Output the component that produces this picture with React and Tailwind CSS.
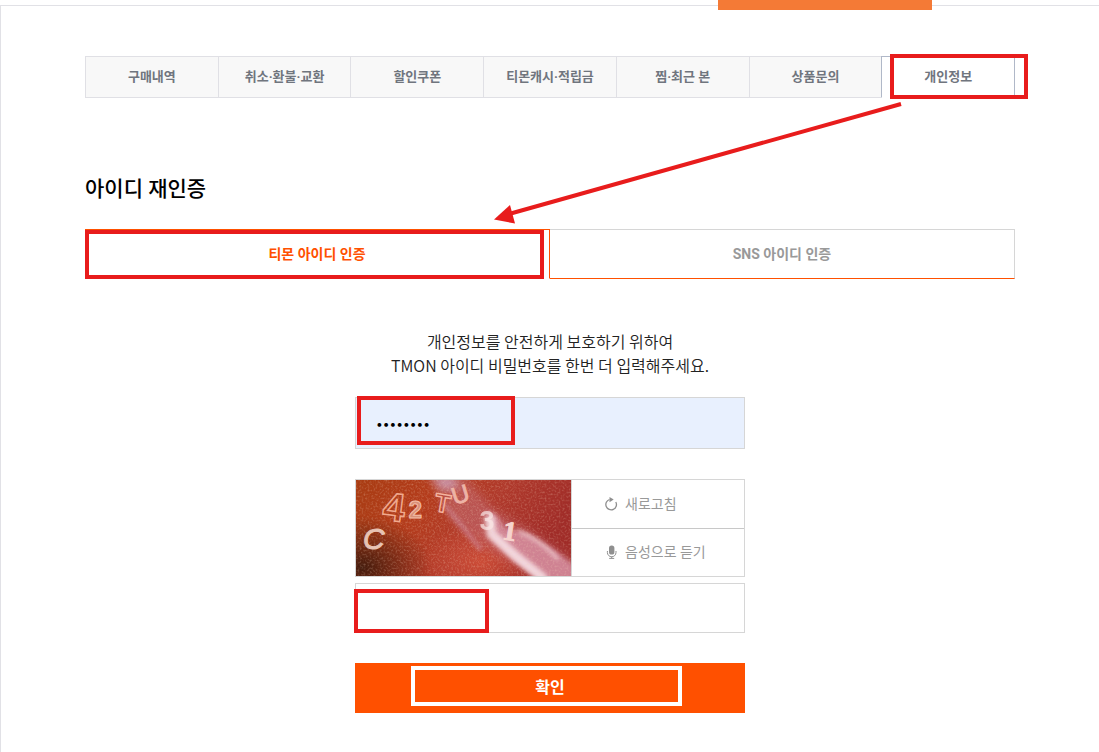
// src/App.jsx
import React, { useState } from "react";

const MENU = [
  "구매내역",
  "취소·환불·교환",
  "할인쿠폰",
  "티몬캐시·적립금",
  "찜·최근 본",
  "상품문의",
  "개인정보",
];

// Outline drawn over a control to point the reader at it
const Marker = ({ className }) => (
  <span
    aria-hidden="true"
    className={`pointer-events-none absolute border-4 ${className}`}
  />
);

const RefreshIcon = () => (
  <svg className="h-[14px] w-[14px]" viewBox="0 0 14 14" fill="none" aria-hidden="true">
    <path d="M11.8 5A5.300 5.300 0 1 1 5.500 2.500" stroke="#8f8f8f" strokeWidth="1.300" />
    <path d="M5.500 0l4.200 2.400-4.200 2.900z" fill="#8f8f8f" />
  </svg>
);

const MicIcon = () => (
  <svg className="h-[14px] w-[14px]" viewBox="0 0 14 14" fill="none" aria-hidden="true">
    <rect x="5" y="0.500" width="5.400" height="9" rx="2.600" fill="#8f8f8f" />
    <path d="M3.400 6v1.500a4.300 4.300 0 0 0 8.600 0V6M7.700 11.500V13M5.200 13.400h5" stroke="#8f8f8f" />
  </svg>
);

const CaptchaImage = () => (
  <svg
    className="block h-24 w-full"
    viewBox="0 0 216 96"
    preserveAspectRatio="none"
    role="img"
    aria-label="자동입력 방지 문자"
  >
    <defs>
      <linearGradient id="base" x1="0" y1="0" x2="1" y2="0.3">
        <stop offset="0" stopColor="#a83c12" />
        <stop offset="0.35" stopColor="#b43c1c" />
        <stop offset="0.65" stopColor="#b03a2c" />
        <stop offset="1" stopColor="#a02c28" />
      </linearGradient>
      <radialGradient id="shade">
        <stop offset="0" stopColor="#30150a" stopOpacity="0.85" />
        <stop offset="1" stopColor="#30150a" stopOpacity="0" />
      </radialGradient>
      <radialGradient id="glow">
        <stop offset="0" stopColor="#d4523a" stopOpacity="0.8" />
        <stop offset="1" stopColor="#d4523a" stopOpacity="0" />
      </radialGradient>
      <filter id="soft" x="-20%" y="-20%" width="140%" height="140%">
        <feGaussianBlur stdDeviation="2" />
      </filter>
      <filter id="softer" x="-20%" y="-20%" width="140%" height="140%">
        <feGaussianBlur stdDeviation="5" />
      </filter>
      <filter id="grain" x="0" y="0" width="100%" height="100%">
        <feTurbulence type="fractalNoise" baseFrequency="0.5" numOctaves="3" seed="4" />
        <feColorMatrix values="0 0 0 0 0.9  0 0 0 0 0.65  0 0 0 0 0.5  0 1.8 0 0 -0.8" />
      </filter>
    </defs>
    <rect width="216" height="96" fill="url(#base)" />
    <ellipse cx="6" cy="88" rx="70" ry="52" fill="url(#shade)" />
    <ellipse cx="125" cy="82" rx="60" ry="40" fill="url(#glow)" />
    <path d="M74-6h34l28 34 40 24 44 30v18h-34l-50-30-40-30z" fill="#c4707c" opacity="0.5" filter="url(#softer)" />
    <path d="M74-4h24l6 12-18 2z" fill="#d0b0d0" opacity="0.7" filter="url(#softer)" />
    <path d="M88 24l38 46" stroke="#d090a8" strokeWidth="5" opacity="0.55" filter="url(#soft)" />
    <path d="M130 30l10 4 10 14 24 6 28 18 18 14v14h-34l-30-22-18-18z" fill="#d994a8" opacity="0.75" filter="url(#soft)" />
    <path d="M134 36l2 18 24 22 30 24" stroke="#f8e4ea" strokeWidth="10" fill="none" opacity="0.85" filter="url(#soft)" />
    <path d="M163 51q24 10 40 28" stroke="#f6dade" strokeWidth="3" fill="none" opacity="0.8" filter="url(#soft)" />
    <rect width="216" height="96" filter="url(#grain)" opacity="0.35" />
    <g fontFamily='"Liberation Sans", sans-serif' fontWeight="700">
      <text x="7" y="69" fontSize="30" fontStyle="italic" fontWeight="400" fill="#e8c3b4" stroke="#e8c3b4">C</text>
      <text x="27" y="41" fontSize="40" fill="none" stroke="#f0a98e" strokeWidth="1.500" transform="rotate(7 38 30)">4</text>
      <text x="53" y="38" fontSize="24" fill="#d89078" stroke="#f4bea8">2</text>
      <text x="79" y="32" fontSize="26" fill="none" stroke="#f4b4a0" strokeWidth="1.400" transform="rotate(10 86 24)">T</text>
      <text x="96" y="23" fontSize="24" fontWeight="400" fill="#edb3a6" stroke="#edb3a6" transform="rotate(-17 104 14)">U</text>
      <text x="124" y="50" fontSize="27" fill="#fae8e6" opacity="0.7">3</text>
      <text x="148" y="60" fontSize="27" fontFamily='"Liberation Serif", serif' fill="#f6d4ce" stroke="#f6d4ce" transform="rotate(9 154 50)">1</text>
    </g>
  </svg>
);

export default function App() {
  const [password, setPassword] = useState("tmonpass");
  const [answer, setAnswer] = useState("");

  return (
    <div className="relative min-h-screen bg-white pt-[5px] font-['Roboto','Noto_Sans_CJK_KR',sans-serif]">
      <div className="absolute top-0 right-[167px] h-[10px] w-[214px] bg-[#f47a36]" />

      <div className="min-h-[747px] border-t border-l border-[#e1e1e6] pt-[50px] pb-8">
        <div className="relative mx-auto max-w-[930px]">
          {/* --- My page menu --- */}
          <nav>
            <ul className="flex h-[42px]">
              {MENU.map((label) => {
                const active = label === "개인정보";
                return (
                  <li
                    key={label}
                    className={`relative flex-1 border-y border-l ${
                      active
                        ? "border-r border-[#b0b8c8] border-b-white bg-white"
                        : "border-[#e0e0e5] bg-[#f8f8f8]"
                    }`}
                  >
                    <a
                      href="#"
                      aria-current={active ? "page" : undefined}
                      className="flex h-full items-center justify-center text-[13px] font-bold whitespace-nowrap text-[#70757e]"
                    >
                      {label}
                    </a>
                    {active && (
                      <Marker className="-top-[3px] left-2 h-[45px] w-[138px] border-[#e81c1c]" />
                    )}
                  </li>
                );
              })}
            </ul>
          </nav>

          {/* Arrow from the menu to the first tab */}
          <svg
            className="pointer-events-none absolute top-[42px] right-[110px] h-[130px] w-[420px]"
            viewBox="0 0 420 130"
            aria-hidden="true"
          >
            <path d="M416 6L24 116" stroke="#e81c1c" strokeWidth="4" />
            <path d="M9 121.500L25 107l5 18.500z" fill="#e81c1c" />
          </svg>

          <h1 className="mt-[76px] text-[21px] leading-[30px] font-medium text-black">
            아이디 재인증
          </h1>

          {/* --- Account type tabs --- */}
          <div role="tablist" className="mt-[25px] flex h-[50px] text-sm font-bold">
            <button
              type="button"
              role="tab"
              aria-selected="true"
              className="relative flex-1 border-y border-r border-[#ff5000] border-b-white text-[#ff5000]"
            >
              티몬 아이디 인증
              <Marker className="top-0 right-[5px] left-0 h-[49px] border-[#e81c1c]" />
            </button>
            <button
              type="button"
              role="tab"
              aria-selected="false"
              className="flex-1 border-t border-r border-b border-[#d6d6d6] border-b-[#ff5000] text-[#999]"
            >
              SNS 아이디 인증
            </button>
          </div>

          <p className="mt-[50px] text-center font-['Noto_Sans_CJK_KR',sans-serif] text-base leading-6 font-[350] text-[#222]">
            개인정보를 안전하게 보호하기 위하여
            <br />
            TMON 아이디 비밀번호를 한번 더 입력해주세요.
          </p>

          {/* --- Re-authentication form --- */}
          <form
            className="mx-auto mt-5 w-full max-w-[390px]"
            onSubmit={(e) => e.preventDefault()}
          >
            <div className="relative">
              <input
                type="password"
                aria-label="비밀번호"
                value={password}
                onChange={(e) => setPassword(e.target.value)}
                className="block h-[52px] w-full border border-[#d6d6d6] bg-[#e8f0fe] px-5 font-['Inter',sans-serif] text-xs text-black outline-none"
              />
              <Marker className="-top-px left-0.5 h-[49px] w-[158px] border-[#e81c1c]" />
            </div>

            <div className="mt-[30px] flex border border-[#d6d6d6]">
              <div className="flex-1">
                <CaptchaImage />
              </div>
              <div className="flex w-[173px] flex-col border-l border-[#d6d6d6] text-sm text-[#999]">
                <button
                  type="button"
                  className="flex flex-1 items-center gap-[7px] border-b border-[#c8c8c8] pl-8"
                >
                  <RefreshIcon />
                  새로고침
                </button>
                <button type="button" className="flex flex-1 items-center gap-[7px] pl-8">
                  <MicIcon />
                  음성으로 듣기
                </button>
              </div>
            </div>

            <div className="relative mt-1.5">
              <input
                type="text"
                aria-label="자동입력 방지 문자 입력"
                value={answer}
                onChange={(e) => setAnswer(e.target.value)}
                className="block h-[50px] w-full border border-[#d6d6d6] px-5 text-base outline-none"
              />
              <Marker className="top-1.5 -left-px h-11 w-[135px] border-[#e81c1c]" />
            </div>

            <button
              type="submit"
              className="relative mt-[30px] block h-[50px] w-full bg-[#ff5000] text-base font-bold text-white"
            >
              확인
              <Marker className="top-[3px] left-14 h-10 w-[271px] border-white" />
            </button>
          </form>
        </div>
      </div>
    </div>
  );
}
